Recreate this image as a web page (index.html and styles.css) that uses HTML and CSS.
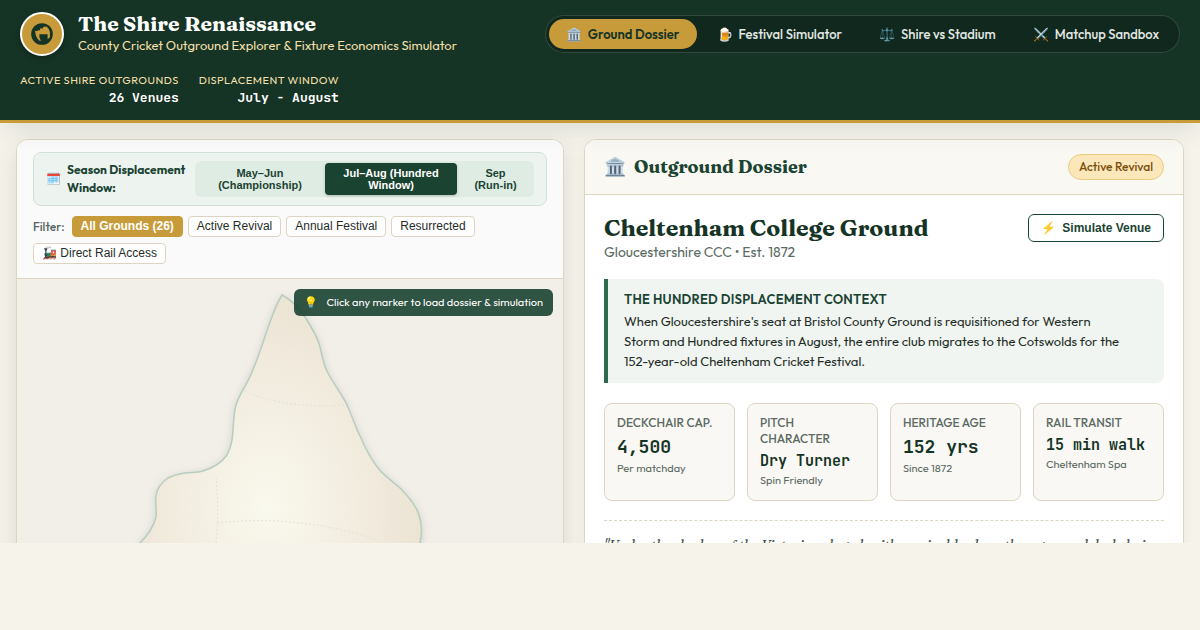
FILE: index.html
```html
<!DOCTYPE html>
<html lang="en">
<head>
<meta charset="utf-8">
<meta name="viewport" content="width=device-width, initial-scale=1">
<title>The Shire Renaissance</title>
<link rel="stylesheet" href="styles.css">
</head>
<body>
<header class="site-header">
  <div class="brand">
    <div class="crest">
      <svg viewBox="0 0 24 24" width="26" height="26" fill="currentColor" aria-hidden="true"><path fill-rule="evenodd" d="M12 2a10 10 0 1 0 0 20 10 10 0 0 0 0-20zM5.600 9.300H7.800L8.600 8.600H10.200V7H12.500L13.500 5.300H16.600L18.300 7.500L19.300 10V15L17.200 16.800V12.300H9.600V15L11 18.400L9.400 18L7.400 15.800L6.200 13Z"/></svg>
    </div>
    <div>
      <h1 class="brand-title">The Shire Renaissance</h1>
      <p class="brand-sub">County Cricket Outground Explorer &amp; Fixture Economics Simulator</p>
    </div>
  </div>
  <nav class="tabs">
    <button class="tab tab-active"><span>🏛️</span>Ground Dossier</button>
    <button class="tab"><span>🍺</span>Festival Simulator</button>
    <button class="tab"><span>⚖️</span>Shire vs Stadium</button>
    <button class="tab"><span>⚔️</span>Matchup Sandbox</button>
  </nav>
  <dl class="stats">
    <div class="stat"><dt>Active Shire Outgrounds</dt><dd>26 Venues</dd></div>
    <div class="stat"><dt>Displacement Window</dt><dd>July - August</dd></div>
  </dl>
</header>
<main class="workspace">
  <section class="panel map-panel">
    <div class="toolbar">
      <div class="season">
        <div class="season-label"><span>🗓️</span><strong>Season Displacement Window:</strong></div>
        <div class="segments">
          <button class="segment">May–Jun (Championship)</button>
          <button class="segment segment-active">Jul–Aug (Hundred Window)</button>
          <button class="segment">Sep (Run-in)</button>
        </div>
      </div>
      <div class="filters">
        <span class="filter-label">Filter:</span>
        <button class="chip chip-active">All Grounds (26)</button>
        <button class="chip">Active Revival</button>
        <button class="chip">Annual Festival</button>
        <button class="chip">Resurrected</button>
        <button class="chip">🚂 Direct Rail Access</button>
      </div>
    </div>
    <div class="map">
      <div class="map-tip"><span>💡</span>Click any marker to load dossier &amp; simulation</div>
      <svg class="map-svg" viewBox="17 279 546 500" role="img" aria-label="Map of grounds">
        <defs>
          <radialGradient id="land" gradientUnits="userSpaceOnUse" cx="0" cy="0" r="160" gradientTransform="translate(268 508) scale(1 1.4)">
            <stop offset="0" stop-color="#faf9ed"/>
            <stop offset="0.7" stop-color="#f0e9dc"/>
            <stop offset="1" stop-color="#ebe4d2"/>
          </radialGradient>
        </defs>
        <path class="land" d="M282 295C290 299 299 308 305 317C312 328 318 338 320 347C323 359 323 364 328 373C333 383 341 393 346 403C352 415 355 427 361 438C366 450 371 459 378 468C385 477 394 482 401 489C409 497 416 506 419 515C422 524 422 534 420 543C412 590 390 640 350 680L180 720C150 690 120 600 140 543C147 536 153 529 156 517C157 510 155 505 156 496C157 488 162 482 168 478C183 470 193 474 203 471C213 468 222 462 227 455C236 438 231 424 236 405C239 394 247 385 252 372C264 345 270 314 282 295Z"/>
        <path class="region" d="M244 391Q284 409 346 405"/>
        <path class="region" d="M216 477Q219 509 216 543"/>
        <path class="region" d="M217 523Q300 514 377 540"/>
      </svg>
    </div>
  </section>
  <section class="panel dossier">
    <div class="dossier-head">
      <h2 class="dossier-title"><span class="dossier-icon">🏛️</span>Outground Dossier</h2>
      <span class="badge">Active Revival</span>
    </div>
    <div class="dossier-body">
      <div class="ground-row">
        <div>
          <h3 class="ground-name">Cheltenham College Ground</h3>
          <p class="ground-meta">Gloucestershire CCC • Est. 1872</p>
        </div>
        <button class="simulate"><span>⚡</span>Simulate Venue</button>
      </div>
      <div class="context">
        <h4 class="context-title">The Hundred Displacement Context</h4>
        <p class="context-text">When Gloucestershire's seat at Bristol County Ground is requisitioned for Western Storm and Hundred fixtures in August, the entire club migrates to the Cotswolds for the 152-year-old Cheltenham Cricket Festival.</p>
      </div>
      <div class="metrics">
        <div class="metric"><div class="metric-label">Deckchair Cap.</div><div class="metric-value">4,500</div><div class="metric-note">Per matchday</div></div>
        <div class="metric"><div class="metric-label">Pitch Character</div><div class="metric-value metric-value-small">Dry Turner</div><div class="metric-note">Spin Friendly</div></div>
        <div class="metric"><div class="metric-label">Heritage Age</div><div class="metric-value">152 yrs</div><div class="metric-note">Since 1872</div></div>
        <div class="metric"><div class="metric-label">Rail Transit</div><div class="metric-value metric-value-small">15 min walk</div><div class="metric-note">Cheltenham Spa</div></div>
      </div>
      <blockquote class="quote">"Under the shadow of the Victorian chapel, with marigolds along the ropes and deckchairs</blockquote>
    </div>
  </section>
</main>
</body>
</html>
```
FILE: styles.css
```css
:root {
  --pine: #153426;
  --green: #1b4332;
  --gold: #c89b3a;
  --cream: #f6f3eb;
  --line: #ddd5c1;
  --sans: Outfit, Lato, sans-serif;
  --serif: Fraunces, "DejaVu Serif", serif;
  --mono: "JetBrains Mono", "DejaVu Sans Mono", monospace;
  --ui: "Liberation Sans", Arial, sans-serif;
}
* { box-sizing: border-box; }
h1, h2, h3, h4, p, dl, dd, blockquote { margin: 0; }
button { cursor: pointer; }
body {
  margin: 0;
  height: 100vh;
  padding-bottom: 87px;
  display: flex;
  flex-direction: column;
  background: var(--cream);
  color: #1f2d26;
  font-family: var(--sans);
  overflow: hidden;
}
.site-header {
  position: relative;
  z-index: 1;
  display: flex;
  flex-wrap: wrap;
  align-items: center;
  justify-content: space-between;
  gap: 16px 20px;
  padding: 12px 20px 14px;
  background: var(--pine);
  border-bottom: 3px solid var(--gold);
  box-shadow: 0 10px 25px -5px rgba(20, 51, 38, 0.12);
}
.brand { display: flex; align-items: center; gap: 14px; }
.crest {
  width: 44px;
  height: 44px;
  display: grid;
  place-items: center;
  border: 2px solid #fff;
  border-radius: 50%;
  background: var(--gold);
  color: var(--pine);
  box-shadow: 0 2px 6px rgba(0, 0, 0, 0.3);
}
.brand-title { font: 700 21px/22px var(--serif); color: #fff; }
.brand-sub { font-size: 13px; line-height: 22px; color: #f3dfa8; }
.tabs {
  display: flex;
  gap: 3px;
  padding: 3px;
  border: 1px solid rgba(255, 255, 255, 0.15);
  border-radius: 20px;
  background: #10281d;
}
.tab {
  display: flex;
  align-items: center;
  gap: 6px;
  padding: 0 17px;
  height: 30px;
  border: 0;
  border-radius: 15px;
  background: none;
  color: #e3e8e5;
  font: 500 13px/18px var(--sans);
}
.tab-active { background: var(--gold); color: var(--pine); font-weight: 600; }
.stats { display: flex; gap: 20px; flex-basis: 100%; }
.stat { text-align: right; }
.stat dt { font-size: 11px; line-height: 17px; letter-spacing: 0.04em; text-transform: uppercase; color: #f3dfa8; }
.stat dd { font: 600 13px/17px var(--mono); color: #fff; }
.workspace {
  flex: 1;
  min-height: 0;
  display: grid;
  grid-template-columns: minmax(0, 548fr) minmax(0, 600fr);
  align-items: start;
  gap: 20px;
  padding: 16px;
  overflow: hidden;
}
.panel {
  overflow: hidden;
  border: 1px solid var(--line);
  border-radius: 12px;
  background: #fff;
  box-shadow: 0 4px 12px rgba(20, 51, 38, 0.05);
}
.map-panel { box-shadow: 0 8px 24px rgba(20, 51, 38, 0.12); }
.toolbar {
  display: flex;
  flex-direction: column;
  gap: 10px;
  padding: 12px 16px 14px;
  background: #fafafa;
  border-bottom: 1px solid var(--line);
}
.season {
  display: flex;
  align-items: center;
  gap: 8px;
  padding: 8px 12px;
  border: 1px solid #d0e0d7;
  border-radius: 8px;
  background: #edf4f0;
}
.season-label { flex: 1; display: flex; align-items: center; gap: 6px; font-size: 12px; line-height: 18px; color: var(--green); }
.segments { display: flex; gap: 2px; padding: 2px; border-radius: 6px; background: #dfece4; }
.segment {
  width: 126px;
  padding: 4px 12px;
  border: 0;
  border-radius: 4px;
  background: none;
  color: var(--green);
  font: 700 11px/12px var(--ui);
}
.segment-active { width: 132px; background: var(--green); color: #fff; box-shadow: 0 1px 3px rgba(0, 0, 0, 0.2); }
.segment:last-child { width: 73px; }
.filters { display: flex; flex-wrap: wrap; align-items: center; gap: 6px 5px; }
.filter-label { margin-right: 2px; font-size: 12px; font-weight: 500; line-height: 18px; color: #55655d; }
.chip {
  padding: 2px 8px;
  border: 1px solid var(--line);
  border-radius: 4px;
  background: #fff;
  color: #1f2d26;
  font: 400 12px/15px var(--ui);
}
.chip-active { border-color: var(--gold); background: var(--gold); color: #fff; font-weight: 700; }
.map { position: relative; background: #f2efe8; }
.map-svg { display: block; width: 100%; }
.land { fill: url(#land); stroke: #b9ccc0; stroke-width: 1.5; filter: drop-shadow(0 2px 4px rgba(20, 51, 38, 0.15)); }
.region { fill: none; stroke: #dfe3d8; stroke-dasharray: 2 2; }
.map-tip {
  position: absolute;
  top: 10px;
  right: 10px;
  display: flex;
  gap: 8px;
  padding: 5px 10px;
  border-radius: 6px;
  background: rgba(27, 67, 50, 0.9);
  color: #fff;
  font-size: 11px;
  line-height: 17px;
}
.dossier-head {
  display: flex;
  align-items: center;
  justify-content: space-between;
  padding: 14px 19px;
  border-bottom: 1px solid var(--line);
  background: #faf8f3;
}
.dossier-title { display: flex; gap: 8px; font: 700 18px/26px var(--serif); color: var(--green); }
.dossier-icon { font-size: 18px; }
.badge {
  padding: 3px 10px;
  border: 1px solid #e8cc80;
  border-radius: 13px;
  background: #fbe7ba;
  color: #7a4f0c;
  font-size: 12px;
  font-weight: 500;
  line-height: 18px;
}
.dossier-body { padding: 19px; }
.ground-row { display: flex; align-items: flex-start; justify-content: space-between; margin-bottom: 17px; }
.ground-name { font: 700 23px/29px var(--serif); color: var(--pine); }
.ground-meta { font-size: 14px; line-height: 19px; color: #5b6a63; }
.simulate {
  display: flex;
  align-items: center;
  gap: 6px;
  padding: 5px 12px;
  border: 1px solid var(--green);
  border-radius: 6px;
  background: #fff;
  color: var(--green);
  font: 700 12px/16px var(--ui);
}
.context { padding: 12px 38px 12px 16px; border-left: 4px solid #2d6a4f; border-radius: 0 8px 8px 0; background: #f0f5f2; }
.context-title { margin-bottom: 4px; font-size: 13px; font-weight: 600; line-height: 16px; letter-spacing: 0.02em; text-transform: uppercase; color: var(--green); }
.context-text { font-size: 13px; line-height: 20px; }
.metrics { display: grid; grid-template-columns: repeat(4, 1fr); gap: 12px; margin: 20px 0 19px; }
.metric { padding: 11px 12px 13px; border: 1px solid var(--line); border-radius: 8px; background: #faf8f5; }
.metric-label { font-size: 12px; font-weight: 500; line-height: 16px; text-transform: uppercase; color: #5b6a63; }
.metric-value { margin: 3px 0 2px; font: 600 18px/26px var(--mono); color: var(--pine); }
.metric-value-small { font-size: 15px; line-height: 22px; }
.metric-note { font-size: 11px; line-height: 13px; color: #5b6a63; }
.quote { padding-top: 12px; border-top: 1px dashed var(--line); font: italic 400 14px/24px var(--serif); color: #3f4f47; }
```
